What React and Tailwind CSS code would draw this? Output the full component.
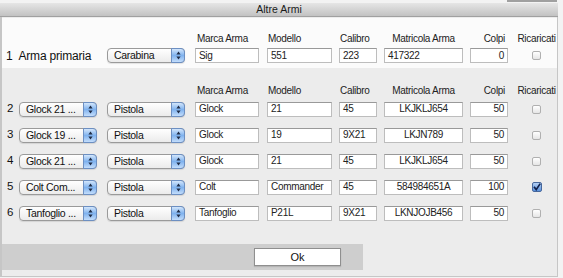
const rows = [
  { n: 2, arma: 'Glock 21 ...', tipo: 'Pistola', marca: 'Glock', modello: '21', calibro: '45', matricola: 'LKJKLJ654', colpi: '50', ric: false },
  { n: 3, arma: 'Glock 19 ...', tipo: 'Pistola', marca: 'Glock', modello: '19', calibro: '9X21', matricola: 'LKJN789', colpi: '50', ric: false },
  { n: 4, arma: 'Glock 21 ...', tipo: 'Pistola', marca: 'Glock', modello: '21', calibro: '45', matricola: 'LKJKLJ654', colpi: '50', ric: false },
  { n: 5, arma: 'Colt Com...', tipo: 'Pistola', marca: 'Colt', modello: 'Commander', calibro: '45', matricola: '584984651A', colpi: '100', ric: true },
  { n: 6, arma: 'Tanfoglio ...', tipo: 'Pistola', marca: 'Tanfoglio', modello: 'P21L', calibro: '9X21', matricola: 'LKNJOJB456', colpi: '50', ric: false },
];

function Popup({ label }) {
  return (
    <div className="relative w-[78px] h-[15px] rounded-[4px] border border-[#9a9a9a] bg-gradient-to-b from-white to-[#ebebeb] shadow-[0_1px_1px_rgba(0,0,0,0.1)] flex items-center pl-[6px] text-[10.5px] tracking-[-0.3px] text-[#111] leading-none shrink-0">
      {label}
      <div className="absolute -right-px -top-px -bottom-px w-[14px] rounded-r-[4px] border border-[#6c8fc2] bg-gradient-to-b from-[#d3e6fb] via-[#7fb2ee] to-[#c3ddfb] flex items-center justify-center">
        <svg width="5" height="9" viewBox="0 0 5 9">
          <path d="M2.5 0.6 L4.6 3.4 L0.4 3.4 Z" fill="#1f2c46" />
          <path d="M2.5 8.4 L4.6 5.6 L0.4 5.6 Z" fill="#1f2c46" />
        </svg>
      </div>
    </div>
  );
}

function Field({ w, value, align = 'left' }) {
  const a = align === 'center' ? 'justify-center' : align === 'right' ? 'justify-end pr-[3px]' : 'justify-start pl-[3px]';
  return (
    <div className={`${w} h-[15px] bg-white border border-[#bdbdbd] border-t-[#999] flex items-center ${a} text-[10px] tracking-[-0.3px] text-[#222] leading-none shrink-0`}>
      {value}
    </div>
  );
}

function Check({ on }) {
  return (
    <div className="w-[47px] flex justify-center shrink-0">
      {on ? (
        <div className="w-[10px] h-[10px] rounded-[2px] border border-[#46679c] bg-gradient-to-b from-[#b4d0f4] to-[#5a91dc] flex items-center justify-center">
          <svg width="8" height="8" viewBox="0 0 8 8">
            <path d="M1 3.8 L3.2 6.6 L7.2 0.6" stroke="#10204a" strokeWidth="1.7" fill="none" />
          </svg>
        </div>
      ) : (
        <div className="w-[9px] h-[9px] rounded-[2px] border border-[#b0b0b0] bg-gradient-to-b from-white to-[#e6e6e6]" />
      )}
    </div>
  );
}

function Headers() {
  return (
    <div className="flex items-center h-[11px] text-[10px] tracking-[-0.3px] text-[#222] leading-none">
      <div className="w-[193px] shrink-0" />
      <div className="w-[64px] pl-[2px] shrink-0">Marca Arma</div>
      <div className="w-[65px] ml-[8px] pl-[1px] shrink-0">Modello</div>
      <div className="w-[38px] ml-[7px] pl-[1px] shrink-0">Calibro</div>
      <div className="w-[79px] ml-[7px] text-center whitespace-nowrap shrink-0">Matricola Arma</div>
      <div className="w-[38px] ml-[7px] pr-[3px] text-right shrink-0">Colpi</div>
      <div className="w-[47px] ml-[5px] text-center shrink-0">Ricaricati</div>
    </div>
  );
}

function Fields({ r, matAlign }) {
  return (
    <>
      <div className="w-[10px] shrink-0" />
      <Field w="w-[64px]" value={r.marca} />
      <div className="w-[8px] shrink-0" />
      <Field w="w-[65px]" value={r.modello} />
      <div className="w-[7px] shrink-0" />
      <Field w="w-[38px]" value={r.calibro} />
      <div className="w-[7px] shrink-0" />
      <Field w="w-[79px]" value={r.matricola} align={matAlign} />
      <div className="w-[7px] shrink-0" />
      <Field w="w-[38px]" value={r.colpi} align="right" />
      <div className="w-[5px] shrink-0" />
      <Check on={r.ric} />
    </>
  );
}

export default function App() {
  return (
    <div className="w-[563px] h-[278px] overflow-hidden bg-[#f3f3f3] flex flex-col font-['Liberation_Sans',Arial,sans-serif]">
      <div className="h-[3px] flex justify-end pr-[6px]">
        <div className="w-[50px] h-[2px] bg-[#a0a0a0]" />
      </div>
      <div className="h-[14px] mr-[5px] bg-gradient-to-b from-[#e6e6e6] to-[#c2c2c2] border-b border-[#a0a0a0] flex items-center justify-center text-[10.5px] text-[#1a1a1a] leading-none">
        Altre Armi
      </div>
      <div className="flex-1 mr-[5px] border-l-2 border-r border-b border-[#c6c6c6] bg-[#ececec] flex flex-col">
        <div className="h-[50px] mt-px bg-[#fbfbfb] pt-[15px] flex flex-col">
          <Headers />
          <div className="flex items-center h-[15px] mt-[4px]">
            <div className="w-[105px] pl-[4px] shrink-0 text-[12px] tracking-[-0.2px] text-[#111] leading-none flex gap-[6px]">
              <span>1</span>
              <span>Arma primaria</span>
            </div>
            <Popup label="Carabina" />
            <Fields r={{ marca: 'Sig', modello: '551', calibro: '223', matricola: '417322', colpi: '0', ric: false }} matAlign="left" />
          </div>
        </div>
        <div className="mt-[17px]">
          <Headers />
        </div>
        <div className="flex flex-col">
          {rows.map(r => (
            <div key={r.n} className="h-[26px] flex items-center">
              <div className="w-[17px] pl-[5px] shrink-0 text-[11.5px] text-[#111] leading-none">{r.n}</div>
              <Popup label={r.arma} />
              <div className="w-[10px] shrink-0" />
              <Popup label={r.tipo} />
              <Fields r={r} matAlign="center" />
            </div>
          ))}
        </div>
        <div className="h-[18px]" />
        <div className="w-[361px] h-[26px] bg-[#cecece] flex items-center pl-[252px]">
          <div className="w-[87px] h-[18px] bg-white border border-[#8f8f8f] shadow-[0_1px_1px_rgba(0,0,0,0.12)] flex items-center justify-center text-[11px] text-[#111] leading-none">
            Ok
          </div>
        </div>
      </div>
      <div className="h-[1px]" />
    </div>
  );
}
